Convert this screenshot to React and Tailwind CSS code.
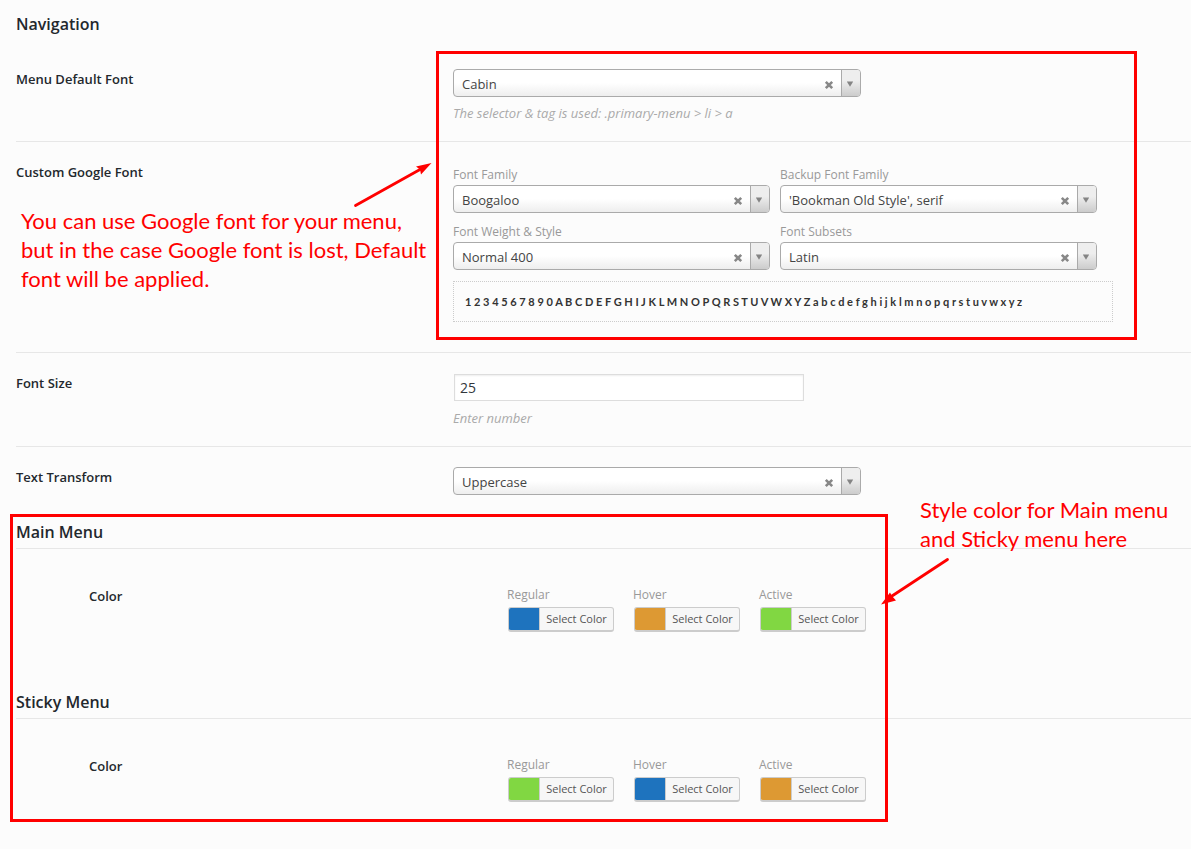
import { useState } from "react";

function SelectBox({ id, options, className = "" }) {
  const [value, setValue] = useState(options[0]);
  return (
    <div
      className={`relative flex h-7 w-full overflow-hidden rounded border border-[#aaa] bg-linear-to-t from-[#eee] to-white to-50% ${className}`}
    >
      <select
        id={id}
        value={value}
        onChange={(e) => setValue(e.target.value)}
        className="h-full min-w-0 flex-1 appearance-none bg-transparent pt-1 pl-2 text-[13px] text-[#444] outline-none"
      >
        {options.map((o) => (
          <option key={o} value={o}>
            {o}
          </option>
        ))}
        <option value="" />
      </select>
      <button
        type="button"
        aria-label="Clear selection"
        onClick={() => setValue("")}
        className="flex w-6 shrink-0 items-center justify-center pt-1"
      >
        <svg width="10" height="10" viewBox="0 0 10 10">
          <path d="M1.8 1.8l6.4 6.4M8.2 1.8L1.8 8.2" stroke="#888" strokeWidth="2.6" />
        </svg>
      </button>
      <span className="pointer-events-none flex w-[19px] shrink-0 items-center justify-center border-l border-[#aaa] bg-linear-to-t from-[#ccc] to-[#eee] to-60% pt-0.5 pr-0.5">
        <svg width="8" height="6" viewBox="0 0 8 6">
          <path d="M0.8 0.5h6.4L4 5.7z" fill="#848484" />
        </svg>
      </span>
    </div>
  );
}

function Row({ label, htmlFor, className = "", children }) {
  return (
    <div className={`grid grid-cols-[437px_minmax(0,1fr)] pt-5 ${className}`}>
      <label htmlFor={htmlFor} className="text-[13px] leading-5 font-semibold text-[#23282d]">
        {label}
      </label>
      <div>{children}</div>
    </div>
  );
}

function Hint({ children }) {
  return <p className="mt-1.5 text-[13px] leading-5 text-[#aaa] italic">{children}</p>;
}

function Field({ id, label, options }) {
  return (
    <div>
      <label htmlFor={id} className="block pt-[3px] text-[12px] leading-5 text-[#999]">
        {label}
      </label>
      <SelectBox id={id} options={options} />
    </div>
  );
}

function ColorPicker({ id, label, swatch }) {
  return (
    <div className="w-[106px]">
      <label htmlFor={id} className="block text-[12px] leading-5 text-[#999]">
        {label}
      </label>
      <button
        id={id}
        type="button"
        className="mt-0.5 ml-px flex h-[25px] w-full overflow-hidden rounded-[3px] border border-b-2 border-[#ccc] bg-[#f7f7f7]"
      >
        <span className={`h-full w-[30px] shrink-0 ${swatch}`} />
        <span className="h-full flex-1 border-l border-[#ccc] text-center text-[11px] leading-[22px] text-[#555]">
          Select Color
        </span>
      </button>
    </div>
  );
}

function ColorSection({ title, prefix, swatches }) {
  return (
    <section className="pt-2">
      <h3 className="border-b border-[#e7e7e7] pb-1 text-[16px] leading-6 font-semibold text-[#23282d]">
        {title}
      </h3>
      <div className="grid grid-cols-[418px_minmax(0,1fr)] pt-9 pb-[50px] pl-[73px]">
        <h4 className="pt-px text-[13px] leading-5 font-semibold text-[#23282d]">Color</h4>
        <div className="flex gap-5">
          {["Regular", "Hover", "Active"].map((name, i) => (
            <ColorPicker key={name} id={`${prefix}-${name}`} label={name} swatch={swatches[i]} />
          ))}
        </div>
      </div>
    </section>
  );
}

const BLUE = "bg-[#1e73be]";
const ORANGE = "bg-[#dd9933]";
const GREEN = "bg-[#81d742]";

export default function App() {
  return (
    <main className="relative min-h-screen overflow-hidden bg-[#fcfcfc] pt-3 pl-4 font-['Open_Sans',sans-serif]">
      <h2 className="pb-[13px] text-[16px] leading-6 font-semibold text-[#23282d]">Navigation</h2>

      <div className="relative">
        <Row label="Menu Default Font" htmlFor="menu-font" className="border-b border-[#e7e7e7] pb-[18px]">
          <SelectBox id="menu-font" options={["Cabin"]} className="max-w-[408px]" />
          <Hint>The selector &amp; tag is used: .primary-menu &gt; li &gt; a</Hint>
        </Row>
        <Row label="Custom Google Font" htmlFor="family" className="border-b border-[#e7e7e7] pb-[30px]">
          <div className="grid max-w-[644px] grid-cols-2 gap-x-2.5 gap-y-1.5">
            <Field id="family" label="Font Family" options={["Boogaloo"]} />
            <Field id="backup" label="Backup Font Family" options={["'Bookman Old Style', serif"]} />
            <Field id="weight" label="Font Weight & Style" options={["Normal 400"]} />
            <Field id="subsets" label="Font Subsets" options={["Latin"]} />
          </div>
          <p className="mt-[11px] h-[41px] max-w-[660px] overflow-hidden border border-dotted border-[#ccc] px-[11px] font-['Lato',sans-serif] text-[11px] leading-10 font-bold whitespace-nowrap text-[#333]">
            1 2 3 4 5 6 7 8 9 0 A B C D E F G H I J K L M N O P Q R S T U V W X Y Z a b c d e f g h i j k l m n o p q r s t u v w x y z
          </p>
        </Row>
        <div className="pointer-events-none absolute top-0.5 left-[420px] h-[289px] w-[701px] border-3 border-[#f00]" />
      </div>

      <Row label="Font Size" htmlFor="font-size" className="border-b border-[#e7e7e7] pb-[18px]">
        <div className="p-px">
          <input
            id="font-size"
            type="text"
            defaultValue="25"
            className="block h-[27px] w-full max-w-[350px] border border-[#ddd] bg-white px-[5px] text-[14px] text-[#32373c] shadow-[inset_0_1px_2px_rgba(0,0,0,0.07)] outline-none"
          />
        </div>
        <Hint>Enter number</Hint>
      </Row>
      <Row label="Text Transform" htmlFor="transform" className="pb-[17px]">
        <SelectBox
          id="transform"
          options={["Uppercase", "Lowercase", "Capitalize", "None"]}
          className="max-w-[408px]"
        />
      </Row>

      <div className="relative">
        <ColorSection title="Main Menu" prefix="main" swatches={[BLUE, ORANGE, GREEN]} />
        <ColorSection title="Sticky Menu" prefix="sticky" swatches={[GREEN, BLUE, ORANGE]} />
        <div className="pointer-events-none absolute top-0.5 -left-1.5 h-[308px] w-[878px] border-3 border-[#f00]" />
      </div>

      <p className="absolute top-[206px] left-[21px] font-['Lato',sans-serif] text-[22px] leading-[29px] whitespace-nowrap text-[#f00]">
        You can use Google font for your menu,
        <br />
        but in the case Google font is lost, Default
        <br />
        font will be applied.
      </p>
      <p className="absolute top-[495px] left-[920px] font-['Lato',sans-serif] text-[22px] leading-[29px] whitespace-nowrap text-[#f00]">
        Style color for Main menu
        <br />
        and Sticky menu here
      </p>
      <svg className="pointer-events-none absolute top-[160px] left-[352px]" width="82" height="50" viewBox="0 0 82 50">
        <path d="M3.5 45.5L68 9.5" stroke="#f00" strokeWidth="2.8" strokeLinecap="round" />
        <path d="M79.5 3L64 6.5L68 9.5L69 14.5Z" fill="#f00" />
      </svg>
      <svg className="pointer-events-none absolute top-[555px] left-[878px]" width="74" height="52" viewBox="0 0 74 52">
        <path d="M69.5 4.5L14 41" stroke="#f00" strokeWidth="2.8" strokeLinecap="round" />
        <path d="M3 49.5L12 37.5L14 41L18 45.5Z" fill="#f00" />
      </svg>
    </main>
  );
}
